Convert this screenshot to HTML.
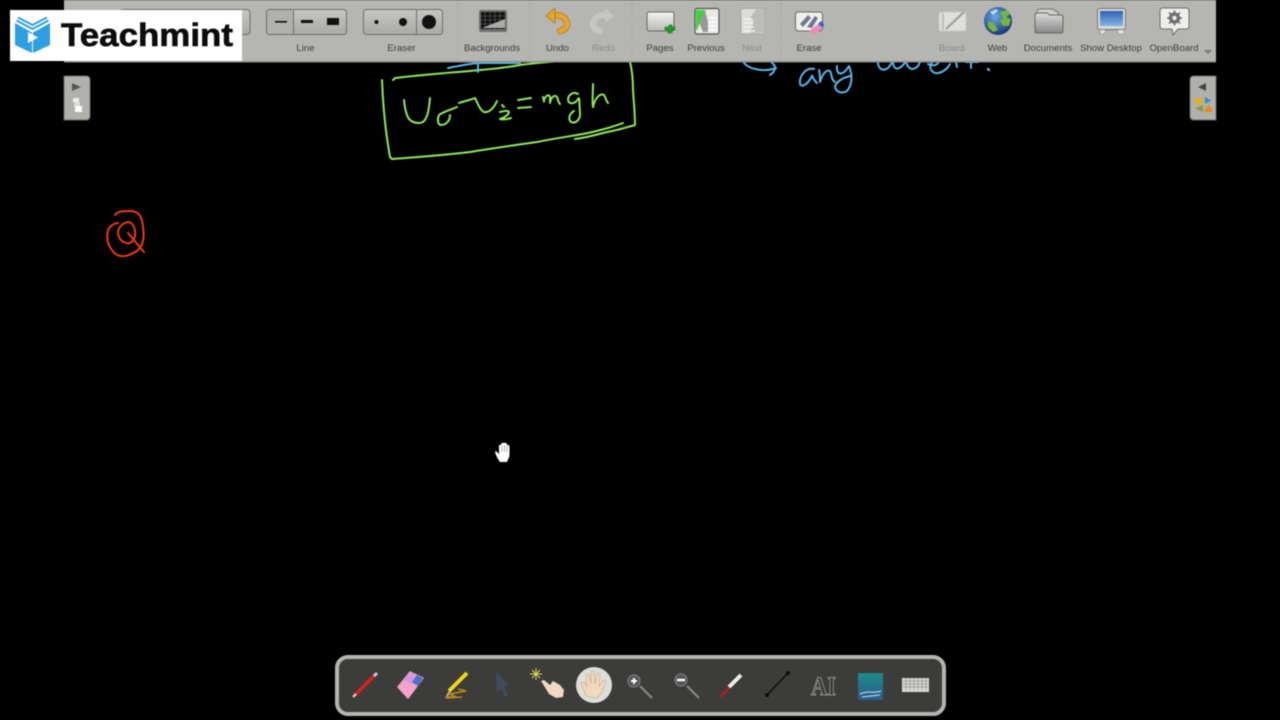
<!DOCTYPE html>
<html><head><meta charset="utf-8"><style>
html,body{margin:0;padding:0;background:#000;width:1280px;height:720px;overflow:hidden}
svg{display:block;filter:blur(.4px)}
.l{font:9.6px "Liberation Sans",sans-serif;fill:#3c3c3c;text-anchor:middle}
.d{fill:#8a8a87}
.g{fill:none;stroke:#8ee85a;stroke-width:2;stroke-linecap:round;stroke-linejoin:round}
.b{fill:none;stroke:#58b4ea;stroke-width:2;stroke-linecap:round;stroke-linejoin:round}
</style></head><body>
<svg width="1280" height="720" viewBox="0 0 1280 720" xmlns="http://www.w3.org/2000/svg">
<defs>
<linearGradient id="pill" x1="0" y1="0" x2="0" y2="1"><stop offset="0" stop-color="#c6c6c2"/><stop offset="1" stop-color="#a9a9a5"/></linearGradient>
<linearGradient id="page" x1="0" y1="0" x2="0" y2="1"><stop offset="0" stop-color="#f4f4f2"/><stop offset="1" stop-color="#b8b8b6"/></linearGradient>
<linearGradient id="folder" x1="0" y1="0" x2="0" y2="1"><stop offset="0" stop-color="#dcdcda"/><stop offset="1" stop-color="#88888a"/></linearGradient>
<linearGradient id="scr" x1="0" y1="0" x2="0" y2="1"><stop offset="0" stop-color="#2d63b4"/><stop offset="1" stop-color="#86b2e6"/></linearGradient>
<linearGradient id="bg" x1="0" y1="0" x2="0" y2="1"><stop offset="0" stop-color="#1e8a8a"/><stop offset="1" stop-color="#2c5c90"/></linearGradient>
<radialGradient id="globe" cx=".4" cy=".35" r=".7"><stop offset="0" stop-color="#6aa8ea"/><stop offset="1" stop-color="#14306e"/></radialGradient>
</defs>

<!-- handwriting -->
<g class="g">
<path d="M382 80 C383 105 386 135 390 157 L392 159 C420 157 445 155 470 152 C495 148 515 145 537 142 C552 139 565 137 577 135"/>
<path d="M393 80 L395 78 C420 75 445 73 470 71 C490 69 505 68 520 65 C535 63 548 62 560 61"/>
<path d="M630 62 C632 70 633 78 633 90 C634 105 635 115 635 125 C625 128 613 131 603 133 C592 136 583 138 575 139"/>
<path d="M577 135 C590 133 610 128 623 123"/>
<path d="M404 100 C405 110 407 116 409 119 C413 123 419 124 423 122 C428 118 429 108 430 98"/>
<path d="M457 107 C450 110 443 112 439 115 C437 120 438 125 441 125 C446 125 450 121 450 115"/>
<path d="M459 103 C465 101 470 100 475 98 C478 104 480 110 484 112 C489 113 494 108 497 101"/>
<path d="M502 105 L504 107 M500 112 C504 111 508 110 509 112 C508 116 503 118 500 119 C504 120 508 119 511 118"/>
<path d="M518 100 L531 98 M518 108 L531 107"/>
<path d="M543 97 C544 100 544 104 544 100 C546 95 549 94 550 97 L550 103 C551 97 555 94 557 97 C558 99 558 102 560 104"/>
<path d="M578 94 C573 91 568 95 568 100 C569 105 575 104 578 99 C580 95 579 105 580 112 C581 120 575 124 571 122 C568 119 569 114 574 111"/>
<path d="M593 84 C593 95 592 103 593 107 C595 98 600 93 604 95 C606 98 606 101 608 103"/>
</g>
<g class="b">
<path d="M448 68 C458 66 468 64 478 63 C492 63 505 63 520 63"/>
<path d="M478 62 L478 72"/>
<path d="M744 63 C750 70 765 72 776 68 M772 63 C777 66 775 72 770 75"/>
<path d="M814 69 C806 67 799 76 800 84 C802 88 808 84 812 76 C812 74 813 80 817 83"/>
<path d="M819 70 C820 74 820 78 820 82 C822 75 826 69 830 71 C832 74 831 80 835 82"/>
<path d="M837 66 C836 76 843 76 849 66 C853 76 852 85 847 91 C842 94 836 92 835 87 C836 82 842 78 850 76"/>
<path d="M878 62 C878 68 882 72 888 68 C890 65 892 63 893 62 C893 68 897 71 902 66 C905 63 905 62 906 62 M906 62 C908 68 912 72 918 66 L920 62"/>
<path d="M928 64 C935 68 942 62 936 60 C929 62 928 70 935 73 C942 74 948 68 950 64"/>
<path d="M956 62 L957 67 M966 62 L978 62 M971 62 L971 68"/>
<path d="M988 69 L989 70" stroke-width="2.4"/>
</g>
<!-- red scribble -->
<g fill="none" stroke="#ee3a12" stroke-width="2" stroke-linecap="round" stroke-linejoin="round">
<path d="M115 215 C117 212 120 211 132 211 C138 212 142 215 143 227 C145 240 142 250 133 253 C125 258 116 257 112 250 C106 243 106 232 110 227 C113 224 116 223 118 223"/>
<path d="M128 222 C122 223 118 228 118 233 C119 241 125 244 130 243 C136 240 136 232 134 227 C133 224 130 222 128 222 Z"/>
<path d="M128 233 L144 252"/>
</g>

<!-- toolbar -->
<rect x="64" y="0" width="1152" height="61" fill="#b5b5b1"/>
<rect x="64" y="61" width="1152" height="1.5" fill="#8e8e8c"/>
<path d="M458 0V61M530 0V61M632 0V61M781 0V61" stroke="#a4a4a0" stroke-dasharray="1 2" fill="none"/>

<!-- pill under logo -->
<rect x="120" y="9.500" width="130" height="25" rx="3" fill="url(#pill)" stroke="#6e6e6c"/>
<!-- Line group -->
<rect x="266.500" y="9.500" width="80" height="25" rx="3" fill="url(#pill)" stroke="#6e6e6c"/>
<rect x="267" y="10" width="26" height="24" rx="3" fill="#b0b0ac"/>
<path d="M293.500 10V34" stroke="#6e6e6c"/>
<rect x="275" y="21" width="12" height="1.600" fill="#111"/>
<rect x="301" y="20" width="12" height="3" fill="#111"/>
<rect x="327" y="18" width="12" height="7" fill="#111"/>
<!-- Eraser group -->
<rect x="363.500" y="9.500" width="79" height="25" rx="3" fill="url(#pill)" stroke="#6e6e6c"/>
<path d="M416.500 10V34" stroke="#6e6e6c"/>
<circle cx="376.500" cy="22" r="2" fill="#111"/>
<circle cx="403" cy="22" r="4" fill="#111"/>
<circle cx="429" cy="22" r="7" fill="#111"/>

<!-- Backgrounds -->
<rect x="479" y="10" width="28" height="22" rx="2" fill="#6e6e6c"/>
<rect x="481" y="12" width="24" height="17" fill="#111"/>
<path d="M481 16H505M481 20H505M481 24H505M485 12V29M490 12V29M495 12V29M500 12V29" stroke="#666" stroke-width=".6"/>
<path d="M482 28L505 19V28Z" fill="#aaa"/>
<!-- Undo -->
<path d="M553 15.500 C562 14 567 19 567 24 C567 28 564 30 560 31" fill="none" stroke="#a97d24" stroke-width="6.500" stroke-linecap="round"/>
<path d="M553 15.500 C562 14 567 19 567 24 C567 28 564 30 560 31" fill="none" stroke="#e8a52e" stroke-width="5" stroke-linecap="round"/>
<path d="M555 8 L546 16 L555 23Z" fill="#e8a52e" stroke="#a97d24" stroke-width=".8"/>
<!-- Redo -->
<path d="M607 15.500 C598 14 593 19 593 24 C593 28 596 30 600 31" fill="none" stroke="#c6c6c4" stroke-width="6" stroke-linecap="round"/>
<path d="M605 8 L614 16 L605 23Z" fill="#c6c6c4"/>
<!-- Pages -->
<rect x="647" y="12" width="27" height="19" rx="2" fill="url(#page)" stroke="#666"/>
<path d="M667 26h4v-2h3v2h3v3h-3v3h-4v-3h-3z" transform="translate(-2 1)" fill="#1f9e22" stroke="#0e6c10" stroke-width=".5"/>
<!-- Previous -->
<rect x="695" y="8.500" width="24" height="25.500" rx="2" fill="#e8e8e6" stroke="#555" stroke-width="1.200"/>
<path d="M696 10H705L697 30H696Z" fill="#35d835"/>
<path d="M705 10L699 22L703 32H708L708 22Z" fill="#999"/>
<path d="M709 18H717M708 22H717M708 26H717M708 30H717" stroke="#fff" stroke-width="1.600"/>
<!-- Next -->
<rect x="741" y="8.500" width="23" height="25.500" rx="2" fill="#dcdcda" stroke="#a8a8a6"/>
<path d="M756 9.500L750 18L754 20L750 33H763V9.500Z" fill="#bcbcba"/>
<path d="M743 19H752M743 23H753M743 27H754M743 31H755" stroke="#f2f2f0" stroke-width="1.500"/>
<!-- Erase -->
<rect x="795.500" y="12" width="27" height="19" rx="3" fill="#efefed" stroke="#666"/>
<path d="M800 24L808 15L811 18L803 27ZM807 27L815 16L818 18L812 28Z" fill="#6d7a8e"/>
<path d="M809 31L818 24L823 28L814 34.500Z" fill="#f08ab4"/>
<path d="M818 24L821 21L824 24L823 28Z" fill="#3e63c8"/>
<!-- Board -->
<rect x="939" y="12" width="27" height="19" rx="2" fill="#dededc" stroke="#c8c8c6"/>
<path d="M946 29L964 12" stroke="#9a9a98" stroke-width="2"/>
<path d="M943 13V30" stroke="#bcbcba" stroke-width="2"/>
<!-- Web -->
<circle cx="998" cy="21" r="14" fill="url(#globe)"/>
<path d="M1000 12L1007 10L1010 14L1006 17L1011 19L1009 26L1003 26L1000 21L1003 18ZM988 21L994 23L998 30L993 32L988 27Z" fill="#74b53e"/>
<path d="M990 12L996 9L998 11L993 15Z" fill="#b8d8ee"/>
<!-- Documents -->
<path d="M1037 12 Q1037 9 1040 9H1052L1058 12V20H1037Z" fill="#cfcfcd" stroke="#777"/>
<path d="M1035 15 Q1035 13 1038 13H1047L1050 15H1061Q1063 15 1063 17V31Q1063 33 1061 33H1037Q1035 33 1035 31Z" fill="url(#folder)" stroke="#666"/>
<!-- Show Desktop -->
<path d="M1100 28V34H1104L1106 30H1117L1119 34H1124V28Z" fill="#e2e2e0" stroke="#8a8a88" stroke-width=".6"/>
<rect x="1097.500" y="8.500" width="28" height="21" rx="2" fill="#d8d8d6" stroke="#777"/>
<rect x="1100" y="11" width="23" height="15" fill="url(#scr)"/>
<!-- OpenBoard -->
<path d="M1163 8H1186Q1189 8 1189 11V26Q1189 29 1186 29H1178L1173 35L1172 29H1163Q1160 29 1160 26V11Q1160 8 1163 8Z" fill="#eeeeec" stroke="#6a6a68"/>
<circle cx="1174.500" cy="18" r="5" fill="#8a8a88" stroke="#555"/>
<path d="M1174.500 10.500V25.500M1167 18H1182M1169 12.500L1180 23.500M1180 12.500L1169 23.500" stroke="#666" stroke-width="1.500"/>
<circle cx="1174.500" cy="18" r="2.200" fill="#eee"/>
<path d="M1204 50H1212L1208 54Z" fill="#777"/>

<!-- labels -->
<text class="l" x="305.500" y="51">Line</text>
<text class="l" x="401.500" y="51">Eraser</text>
<text class="l" x="492" y="51">Backgrounds</text>
<text class="l" x="557.500" y="51">Undo</text>
<text class="l d" x="603.500" y="51">Redo</text>
<text class="l" x="660" y="51">Pages</text>
<text class="l" x="706" y="51">Previous</text>
<text class="l d" x="752" y="51">Next</text>
<text class="l" x="809" y="51">Erase</text>
<text class="l d" x="951.500" y="51">Board</text>
<text class="l" x="997.500" y="51">Web</text>
<text class="l" x="1048" y="51">Documents</text>
<text class="l" x="1111" y="51">Show Desktop</text>
<text class="l" x="1174" y="51">OpenBoard</text>

<!-- side tabs -->
<path d="M64 76H86Q90 76 90 80V116Q90 120 86 120H64Z" fill="#b0b0ac" stroke="#6a6a68"/>
<path d="M72 83L81 87L72 91Z" fill="#555"/>
<rect x="73" y="98" width="6" height="4" fill="#eee"/>
<rect x="74" y="102" width="6" height="4" fill="#ddd"/>
<rect x="75" y="106" width="7" height="6" fill="#fff"/>
<path d="M1216 76H1194Q1190 76 1190 80V116Q1190 120 1194 120H1216Z" fill="#b0b0ac" stroke="#6a6a68"/>
<path d="M1206 83L1198 87L1206 91Z" fill="#444"/>
<rect x="1195" y="98" width="8" height="6" fill="#e4b028"/>
<path d="M1205 97L1211 100.500L1205 104Z" fill="#2e8ed0"/>
<path d="M1195 108.500L1203 105V112Z" fill="#8a9e3a"/>
<path d="M1208.500 105L1212 108.500V112H1205V108.500Z" fill="#e88a22"/>

<!-- logo -->
<rect x="10" y="10" width="232" height="51" fill="#fff"/>
<path d="M15 23L32 32.500V53L15 45Z M50 23L33 32.500V53L50 45Z" fill="#2e9fe0"/>
<path d="M18 17.500L32.500 25L47 17.500M16.500 20.500L32.500 29L48.500 20.500" fill="none" stroke="#2e9fe0" stroke-width="2"/>
<path d="M28 32V43L38 37.500Z" fill="#fff"/>
<text x="61" y="46" font-family="Liberation Sans, sans-serif" font-weight="700" font-size="32" fill="#0c0c0c" stroke="#0c0c0c" stroke-width=".6" textLength="172" lengthAdjust="spacingAndGlyphs">Teachmint</text>

<!-- bottom bar -->
<rect x="337" y="657" width="607" height="57" rx="11" fill="#3c3c3a" stroke="#b4b4b0" stroke-width="4"/>
<!-- pen -->
<path d="M354 696L375 675" stroke="#d42020" stroke-width="3.600"/>
<path d="M374 676L377 673" stroke="#ccc" stroke-width="3"/>
<path d="M353 697L356 694" stroke="#ddd" stroke-width="2"/>
<!-- eraser -->
<path d="M398 687L410 672L423 678L408 698Z" fill="#f4a2c6" stroke="#f4a2c6" stroke-width="1.500" stroke-linejoin="round"/>
<path d="M403 680L410 672L423 678L417 686Z" fill="#d49ad8"/>
<path d="M417 675L423 678L418 686L412 682Z" fill="#4a70d0"/>
<!-- highlighter -->
<path d="M449 691L467 673" stroke="#f0d818" stroke-width="4"/>
<path d="M447 696L450 691" stroke="#bbb" stroke-width="2"/>
<path d="M445 697H456L450 694L466 691L458 689M446 698L462 697" fill="none" stroke="#c08a14" stroke-width="1.600"/>
<!-- arrow -->
<path d="M496 672L509 686L504 686L508 696L505 697L501 688L497 692Z" fill="#404c5e"/>
<!-- pointer hand -->
<path d="M536 668V680M530 674H542M532 670L540 678M540 670L532 678" stroke="#dcd85a" stroke-width="1"/>
<path d="M541 681L544 680L550 685L553 681L560 685L564 690L563 697L556 698L549 694L546 689Z" fill="#f2d8c0"/>
<!-- hand in circle -->
<circle cx="594" cy="685" r="18" fill="#dededa"/>
<path d="M586 696L581 683L584 682L587 687L586 674L589 674L591 684L591 671L594 671L595 684L597 673L600 674L599 686L604 680L606 682L602 692L597 698Z" fill="#f2d8bc" stroke="#c0a890" stroke-width=".6"/>
<!-- zoom in -->
<circle cx="634" cy="681" r="6" fill="#555" stroke="#888"/>
<path d="M631 681H637M634 678V684" stroke="#fff" stroke-width="2"/>
<path d="M640 686L652 698" stroke="#888" stroke-width="2"/>
<!-- zoom out -->
<circle cx="681" cy="680" r="6" fill="#555" stroke="#888"/>
<path d="M677 680H685" stroke="#fff" stroke-width="2.400"/>
<path d="M687 686L699 698" stroke="#888" stroke-width="2"/>
<!-- laser -->
<path d="M720 697L730 687" stroke="#b02018" stroke-width="2.500"/>
<path d="M729 687L741 675" stroke="#eeeeee" stroke-width="4"/>
<!-- line -->
<path d="M767 695L788 673" stroke="#0c0c0c" stroke-width="1.500"/>
<circle cx="767" cy="695" r="2" fill="#0c0c0c"/>
<circle cx="788" cy="673" r="2" fill="#0c0c0c"/>
<!-- AI -->
<text x="811" y="695" font-family="Liberation Serif, serif" font-weight="700" font-size="26" fill="#3a3a38" stroke="#aaa" stroke-width=".7" textLength="25" lengthAdjust="spacingAndGlyphs">AI</text>
<!-- bg thumb -->
<rect x="858" y="673" width="25" height="27" fill="url(#bg)"/>
<path d="M860 694C868 690 874 694 881 691M862 697L880 695" stroke="#cfe0e8" stroke-width="1" fill="none"/>
<!-- keyboard -->
<rect x="902" y="678" width="27" height="14" fill="#d8d8d6"/>
<path d="M903 681H928M903 684H928M903 687H928M906 678V690M910 678V690M914 678V690M918 678V690M922 678V690M926 678V690" stroke="#777" stroke-width=".5"/>

<!-- cursor hand -->
<path d="M500 462C497 458 496 455 495 452L496 451L499 454L499 445L501 445L501.500 443L503 443L504 442.500L505 443L506.500 443L507 445L508.500 445L509.500 446L509.500 456L507 462Z" fill="#fff"/>
<path d="M502 446V452M504.500 445V452M507 446V452" stroke="#777" stroke-width=".6"/>
</svg>
</body></html>
